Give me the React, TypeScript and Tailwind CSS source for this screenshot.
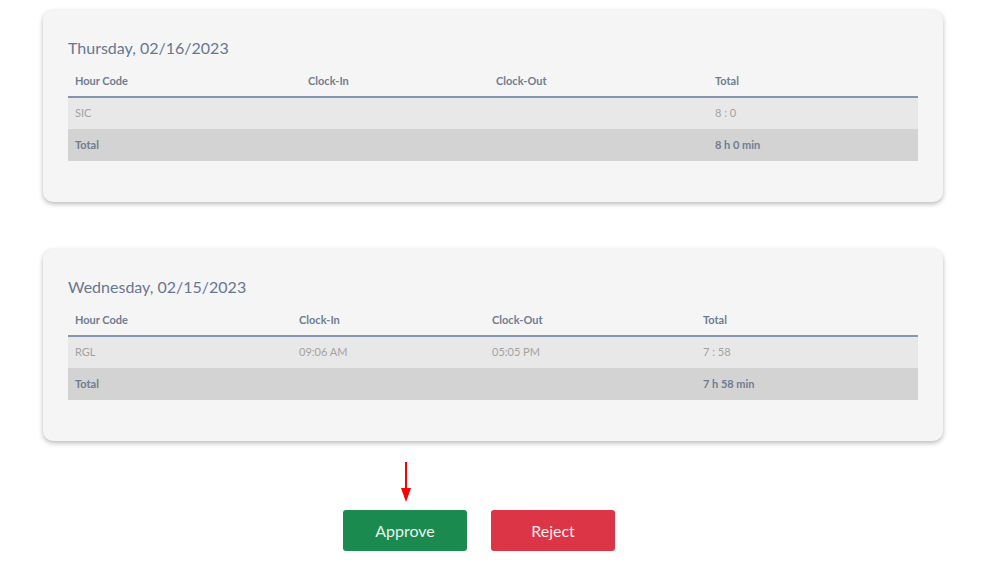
const font = { fontFamily: "Lato, 'Open Sans', sans-serif" };

interface Entry {
  code: string;
  clockIn: string;
  clockOut: string;
  total: string;
}

interface Day {
  title: string;
  cols: string[];
  entries: Entry[];
  sum: string;
}

const days: Day[] = [
  {
    title: "Thursday, 02/16/2023",
    cols: ["w-[240px]", "w-[188px]", "w-[219px]"],
    entries: [{ code: "SIC", clockIn: "", clockOut: "", total: "8 : 0" }],
    sum: "8 h 0 min",
  },
  {
    title: "Wednesday, 02/15/2023",
    cols: ["w-[231px]", "w-[193px]", "w-[211px]"],
    entries: [{ code: "RGL", clockIn: "09:06 AM", clockOut: "05:05 PM", total: "7 : 58" }],
    sum: "7 h 58 min",
  },
];

function DayCard({ day }: { day: Day }) {
  return (
    <section className="rounded-[10px] bg-[#f5f5f5] px-[25px] pt-[27px] pb-[41px] shadow-[0_2px_5px_rgba(0,0,0,0.28)]">
      <h2 className="text-[16px] leading-[22px] text-[#687790]">{day.title}</h2>
      <table className="mt-[11px] w-full border-collapse text-[11px]">
        <thead>
          <tr className="h-[27px] border-b-2 border-[#8796ad] text-left font-bold text-[#6f7d92]">
            <th className={`${day.cols[0]} pl-[7px] pb-[4px] font-bold`}>Hour Code</th>
            <th className={`${day.cols[1]} pb-[4px] font-bold`}>Clock-In</th>
            <th className={`${day.cols[2]} pb-[4px] font-bold`}>Clock-Out</th>
            <th className="pb-[4px] font-bold">Total</th>
          </tr>
        </thead>
        <tbody>
          {day.entries.map((e) => (
            <tr key={e.code} className="h-[32px] bg-[#e8e8e8] text-[#a3a3a3]">
              <td className="pl-[7px]">{e.code}</td>
              <td>{e.clockIn}</td>
              <td>{e.clockOut}</td>
              <td>{e.total}</td>
            </tr>
          ))}
          <tr className="h-[32px] bg-[#d3d3d3] font-bold text-[#6f7d92]">
            <td className="pl-[7px]">Total</td>
            <td />
            <td />
            <td>{day.sum}</td>
          </tr>
        </tbody>
      </table>
    </section>
  );
}

export default function App() {
  return (
    <div className="min-h-[567px] bg-white px-[43px] pt-[10px]" style={font}>
      <div className="w-[900px]">
        <DayCard day={days[0]} />
        <div className="mt-[47px]">
          <DayCard day={days[1]} />
        </div>
      </div>
      <div className="mt-[21px] flex gap-[24px] pl-[300px]">
        <div className="relative">
          <svg
            className="absolute left-[57px] top-[0px]"
            width="12"
            height="40"
            viewBox="0 0 12 40"
          >
            <line x1="6" y1="0" x2="6" y2="28" stroke="#ff0000" strokeWidth="2" />
            <polygon points="1,26 11,26 6,40" fill="#ff0000" />
          </svg>
          <button
            type="button"
            className="mt-[48px] h-[41px] w-[124px] rounded-[3px] bg-[#1a8a4f] text-[16px] text-[#e8f3ec]"
          >
            Approve
          </button>
        </div>
        <button
          type="button"
          className="mt-[48px] h-[41px] w-[124px] rounded-[3px] bg-[#dc3545] text-[16px] text-[#fbe9eb]"
        >
          Reject
        </button>
      </div>
    </div>
  );
}
